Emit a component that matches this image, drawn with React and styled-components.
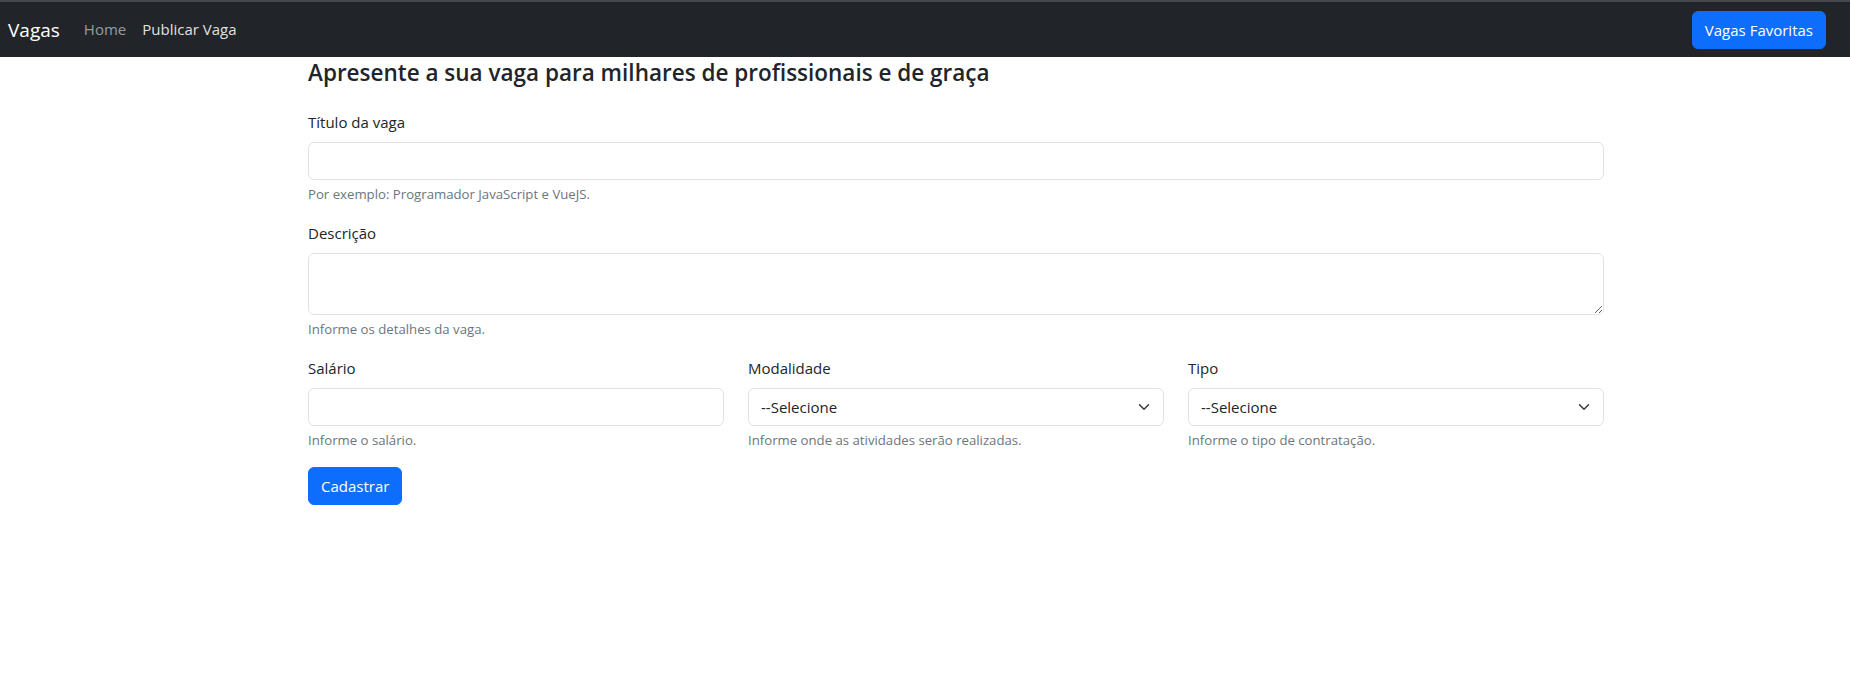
import React from "react";
import styled, { createGlobalStyle } from "styled-components";

const GlobalStyle = createGlobalStyle`
  * {
    box-sizing: border-box;
  }
  body {
    margin: 0;
    background: #fff;
    color: #212529;
    font-family: "Open Sans", "Noto Sans", "Liberation Sans", sans-serif;
    font-size: 16px;
    line-height: 1.5;
  }
`;

const Navbar = styled.nav`
  display: flex;
  align-items: center;
  justify-content: space-between;
  height: 57px;
  padding: 0 24px 0 8px;
  background-color: #212529;
  border-top: 2px solid #45484c;
`;

const NavLeft = styled.div`
  display: flex;
  align-items: center;
`;

const Brand = styled.a`
  font-size: 19px;
  line-height: 30px;
  color: #fff;
  margin-right: 16px;
  text-decoration: none;
`;

const NavLink = styled.a`
  padding: 8px;
  font-size: 15px;
  color: ${(p) => (p.$active ? "rgba(255,255,255,0.88)" : "rgba(255,255,255,0.55)")};
  text-decoration: none;
`;

const Button = styled.button`
  font-family: inherit;
  font-size: 15px;
  line-height: 24px;
  padding: 6px 12px;
  color: #fff;
  background-color: #0d6efd;
  border: 1px solid #0d6efd;
  border-radius: 6px;
  cursor: pointer;
`;

const Container = styled.main`
  width: 1320px;
  margin-left: 296px;
  padding: 0 12px;
`;

const Title = styled.h4`
  margin: 0 0 22px;
  padding-top: 2px;
  font-size: 22.5px;
  font-weight: 600;
  line-height: 28.8px;
`;

const Group = styled.div`
  margin-bottom: 16px;
`;

const Row = styled.div`
  display: grid;
  grid-template-columns: repeat(3, 1fr);
  column-gap: 24px;
`;

const Label = styled.label`
  display: block;
  margin-bottom: 8px;
  font-size: 15px;
  line-height: 24px;
`;

const Input = styled.input`
  display: block;
  width: 100%;
  height: 38px;
  padding: 6px 12px;
  font-family: inherit;
  font-size: 15px;
  color: #212529;
  background: #fff;
  border: 1px solid #dee2e6;
  border-radius: 6px;
`;

const TextArea = styled.textarea`
  display: block;
  width: 100%;
  height: 62px;
  padding: 6px 12px;
  font-family: inherit;
  font-size: 15px;
  color: #212529;
  border: 1px solid #dee2e6;
  border-radius: 6px;
`;

const SelectWrap = styled.div`
  position: relative;
`;

const Select = styled.select`
  display: block;
  width: 100%;
  height: 38px;
  padding: 6px 36px 6px 12px;
  font-family: inherit;
  font-size: 15px;
  color: #212529;
  background: #fff;
  border: 1px solid #dee2e6;
  border-radius: 6px;
  appearance: none;
`;

const Chevron = styled.svg`
  position: absolute;
  right: 12px;
  top: 13px;
  pointer-events: none;
`;

const Help = styled.div`
  margin-top: 4px;
  font-size: 13.2px;
  line-height: 21px;
  color: #6c757d;
`;

const SelectField = ({ id }) => (
  <SelectWrap>
    <Select id={id} defaultValue="">
      <option value="">--Selecione</option>
    </Select>
    <Chevron width="16" height="12" viewBox="0 0 16 16">
      <path
        d="m2 5 6 6 6-6"
        fill="none"
        stroke="#343a40"
        strokeWidth="2"
        strokeLinecap="round"
        strokeLinejoin="round"
      />
    </Chevron>
  </SelectWrap>
);

export default function App() {
  return (
    <>
      <GlobalStyle />
      <Navbar>
        <NavLeft>
          <Brand href="#">Vagas</Brand>
          <NavLink href="#">Home</NavLink>
          <NavLink href="#" $active>
            Publicar Vaga
          </NavLink>
        </NavLeft>
        <Button type="button">Vagas Favoritas</Button>
      </Navbar>

      <Container>
        <Title>Apresente a sua vaga para milhares de profissionais e de graça</Title>

        <Group>
          <Label htmlFor="titulo">Título da vaga</Label>
          <Input id="titulo" type="text" />
          <Help>Por exemplo: Programador JavaScript e VueJS.</Help>
        </Group>

        <Group>
          <Label htmlFor="descricao">Descrição</Label>
          <TextArea id="descricao" rows={2} />
          <Help>Informe os detalhes da vaga.</Help>
        </Group>

        <Row>
          <Group>
            <Label htmlFor="salario">Salário</Label>
            <Input id="salario" type="text" />
            <Help>Informe o salário.</Help>
          </Group>
          <Group>
            <Label htmlFor="modalidade">Modalidade</Label>
            <SelectField id="modalidade" />
            <Help>Informe onde as atividades serão realizadas.</Help>
          </Group>
          <Group>
            <Label htmlFor="tipo">Tipo</Label>
            <SelectField id="tipo" />
            <Help>Informe o tipo de contratação.</Help>
          </Group>
        </Row>

        <Button type="submit">Cadastrar</Button>
      </Container>
    </>
  );
}
